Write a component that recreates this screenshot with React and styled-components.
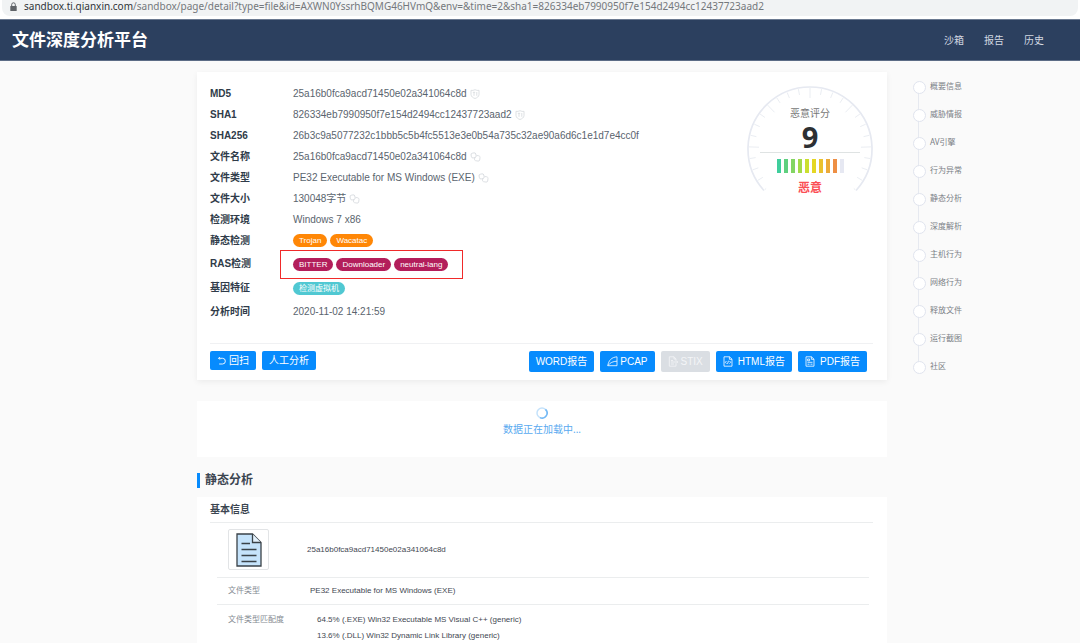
import React from 'react';
import styled, { createGlobalStyle, css } from 'styled-components';

const sans = '"Liberation Sans", "Noto Sans CJK SC", sans-serif';
const ui = '"Noto Sans", "Noto Sans CJK SC", sans-serif';

const GlobalStyle = createGlobalStyle`
  * { box-sizing: border-box; }
  body { margin: 0; background: #fafafa; font-family: ${sans}; color: #5a646e; font-size: 10px; }
  ul, ol, dl, dd, h1, h2, h3, p { margin: 0; padding: 0; list-style: none; }
  button { font-family: inherit; }
`;

const Page = styled.div`
  min-height: 100vh;
  display: flex;
  flex-direction: column;
`;

const AddressBar = styled.div`
  height: 19px;
  padding: 0 2px 3px;
  background: #fff;
`;

const Address = styled.div`
  height: 16px;
  padding: 0 0 3px 8px;
  display: flex;
  align-items: center;
  gap: 7px;
  border-radius: 0 0 8px 8px;
  background: #f1f3f4;
  color: #74787c;
  font: 10px/13px ${ui};
  white-space: nowrap;
  b { font-weight: 400; color: #303438; }
`;

const Header = styled.header`
  height: 42px;
  padding: 0 36px 0 12px;
  display: flex;
  align-items: center;
  justify-content: space-between;
  background: #2c405f;
  border-top: 1px solid #6b7a91;
  border-bottom: 1px solid #5c6c86;
`;

const Brand = styled.h1`
  color: #fff;
  font: 700 17px/24px ${ui};
`;

const TopNav = styled.nav`
  display: flex;
  gap: 20px;
`;

const TopLink = styled.a`
  color: #d3d9e2;
  font: 10px/16px ${ui};
  text-decoration: none;
`;

const Columns = styled.div`
  flex: 1;
  display: grid;
  grid-template-columns: minmax(0, 197fr) minmax(0, 690fr) minmax(0, 193fr);
`;

const Main = styled.main`
  grid-column: 2;
  padding-top: 11px;
  display: flex;
  flex-direction: column;
`;

const Summary = styled.section`
  padding: 11px 14px 8px 13px;
  background: #fff;
  box-shadow: 0 2px 6px rgba(0, 0, 0, 0.06);
`;

const SummaryTop = styled.div`
  display: flex;
  justify-content: space-between;
`;

const Field = styled.div`
  height: ${(p) => (p.$tall ? 24 : 21)}px;
  padding-top: ${(p) => (p.$tall ? 2 : 0)}px;
  display: flex;
  align-items: center;
  dt {
    width: 82px;
    color: #2f3b49;
    font-weight: 700;
    line-height: 16px;
  }
  dd {
    position: relative;
    display: flex;
    align-items: center;
    gap: 3px;
    line-height: 16px;
    white-space: nowrap;
  }
`;

const Value = styled.span`
  margin-left: 1px;
`;

const IconButton = styled.button`
  padding: 0;
  border: 0;
  background: none;
  color: #d9dce0;
  display: flex;
`;

const Tag = styled.span`
  height: 13px;
  padding: 0 6px;
  border-radius: 7px;
  background: ${(p) => p.$color};
  color: #fff;
  font-size: 8px;
  line-height: 13px;
`;

const Tags = styled.span`
  display: flex;
  gap: 3px;
  margin-left: 1px;
`;

const Highlight = styled.span`
  position: absolute;
  inset: -8px -15px -8px -12px;
  border: 1px solid #f02a2a;
`;

const Gauge = styled.div`
  position: relative;
  width: 126px;
  height: 126px;
  margin-top: 3px;
  padding-top: 19px;
  display: flex;
  flex-direction: column;
  align-items: center;
  font-family: ${ui};
  > svg { position: absolute; inset: 0; }
`;

const GaugeLabel = styled.span`
  color: #777;
  line-height: 16px;
`;

const Score = styled.strong`
  width: 100px;
  height: 32px;
  border-bottom: 1px solid #dfe3e3;
  color: #2d3033;
  font-size: 29px;
  line-height: 31px;
  text-align: center;
`;

const Meter = styled.div`
  display: flex;
  gap: 3px;
  margin: 6px 0 7px;
`;

const MeterBar = styled.i`
  width: 4px;
  height: 14px;
  background: ${(p) => p.$color};
`;

const Verdict = styled.span`
  color: #fb4f55;
  font-size: 12px;
  font-weight: 700;
  line-height: 16px;
`;

const Actions = styled.div`
  margin-top: 20px;
  padding: 7px 6px 0 0;
  display: flex;
  justify-content: space-between;
  align-items: flex-start;
  border-top: 1px solid #f0f1f3;
`;

const ActionGroup = styled.div`
  display: flex;
  gap: 6px;
`;

const Button = styled.button`
  height: ${(p) => (p.$large ? 21 : 19)}px;
  padding: 0 7px;
  display: flex;
  align-items: center;
  gap: ${(p) => p.$gap || 2}px;
  border: 0;
  border-radius: 2px;
  background: #078bfd;
  color: #fff;
  font-size: 10px;
  line-height: 16px;
  white-space: nowrap;
  &:disabled { background: #dadee3; color: #f4f5f7; }
`;

const Loading = styled.section`
  height: 56px;
  margin-top: 21px;
  padding-top: 6px;
  display: flex;
  flex-direction: column;
  align-items: center;
  background: #fff;
  color: #5aaaf0;
  line-height: 16px;
  font-family: ${ui};
  p { margin-top: 2px; }
`;

const SectionTitle = styled.h2`
  margin: 16px 0 9px;
  padding-left: 5px;
  border-left: 3px solid #078bfd;
  color: #3b4550;
  font-size: 12px;
  line-height: 15px;
`;

const Details = styled.section`
  flex: 1;
  padding: 0 14px 0 13px;
  background: #fff;
`;

const DetailsTitle = styled.h3`
  height: 26px;
  border-bottom: 1px solid #ebedee;
  color: #3b4550;
  font-size: 10px;
  line-height: 26px;
`;

const DetailsTable = styled.table`
  width: 100%;
  border-collapse: collapse;
  font-size: 8px;
  color: #3f4852;
`;

const Inset = styled.div`
  padding: 0 4px 0 7px;
`;

const cell = css`
  padding: 0;
  text-align: left;
  font-weight: 400;
  vertical-align: ${(p) => (p.$top ? 'top' : 'middle')};
`;

const DetailRow = styled.tr`
  height: ${(p) => p.$height}px;
  border-bottom: ${(p) => (p.$last ? 0 : 1)}px solid #ebedee;
`;

const HeadCell = styled.th`
  ${cell}
  width: 90px;
  padding-left: 11px;
  padding-top: ${(p) => (p.$top ? 7 : 0)}px;
  color: #858b92;
  line-height: 16px;
`;

const DataCell = styled.td`
  ${cell}
  padding-left: ${(p) => p.$indent || 0}px;
  padding-top: ${(p) => (p.$top ? 7 : 0)}px;
  line-height: 16px;
`;

const Thumb = styled.span`
  width: 41px;
  height: 41px;
  display: flex;
  align-items: center;
  justify-content: center;
  border: 1px solid #e2e4e6;
  border-radius: 2px;
`;

const Anchors = styled.ol`
  grid-column: 3;
  && { padding: 11px 0 0 26px; }
`;

const Anchor = styled.li`
  position: relative;
  height: 28px;
  padding-left: 17px;
  display: flex;
  align-items: center;
  &:not(:last-child)::before {
    content: '';
    position: absolute;
    left: 5px;
    top: 14px;
    width: 1px;
    height: 28px;
    background: #e6e9f0;
  }
  &::after {
    content: '';
    position: absolute;
    left: 0;
    top: 9px;
    width: 11px;
    height: 11px;
    border: 1px solid #e0e4ee;
    border-radius: 50%;
    background: #fff;
  }
  a {
    color: #7b8086;
    font: 8px/16px ${ui};
    text-decoration: none;
  }
`;

const LockIcon = () => (
  <svg width="7" height="10" viewBox="0 0 7 10" fill="none">
    <path d="M1.7 4.5V2.6a1.8 1.8 0 0 1 3.6 0v1.9" stroke="#5f6368" strokeWidth="1" />
    <rect x="0.3" y="4" width="6.4" height="5" rx="0.6" fill="#5f6368" />
  </svg>
);

const ShieldIcon = () => (
  <svg width="10" height="10" viewBox="0 0 10 10" fill="none" stroke="currentColor" strokeWidth="0.9">
    <path d="M1 1.300C2.500 1.600 3.800 1.300 5 .6c1.200.7 2.500 1 4 .7v4.200C9 7.600 7 8.800 5 9.500 3 8.800 1 7.600 1 5.500z" />
    <path d="M2.800 3.300h2.400M4 3.300v3.500M6.800 3v3.800" />
  </svg>
);

const CopyIcon = () => (
  <svg width="11" height="10" viewBox="0 0 11 10" fill="none" stroke="currentColor" strokeWidth="0.9">
    <rect x="1.200" y="1" width="4.800" height="4.800" rx="1.500" transform="rotate(-12 3.600 3.400)" />
    <path d="M6.500 3.400l2.300.4c.8.2 1.300.8 1.200 1.600l-.3 2.600c-.2.8-.8 1.200-1.600 1.100l-2.500-.4c-.8-.2-1.200-.8-1.100-1.500l.3-1.600" />
  </svg>
);

const RescanIcon = () => (
  <svg width="10" height="10" viewBox="0 0 10 10" fill="none" stroke="currentColor" strokeWidth="0.9">
    <path d="M1.500 2.300h4A2.800 2.800 0 0 1 5.500 8H2.200M2.900 1 1.600 2.300l1.300 1.300" />
  </svg>
);

const PcapIcon = () => (
  <svg width="11" height="11" viewBox="0 0 11 11" fill="none" stroke="currentColor" strokeWidth="0.8">
    <path d="M.8 9.700C1.500 4.500 4.500 1.300 10 .8v8.900zM.8 9.700C3.200 6.400 6 5.400 10 5.200" />
  </svg>
);

const StixIcon = () => (
  <svg width="11" height="11" viewBox="0 0 11 11" fill="none" stroke="currentColor" strokeWidth="0.8">
    <path d="M8 4V3L6 .8H1.300v9.400H8V8M6 .8V3h2M3 4.500h2M3 6h5M7.500 4.500 10 6 7.500 7.600M3 8h3" />
  </svg>
);

const HtmlIcon = () => (
  <svg width="10" height="11" viewBox="0 0 10 11" fill="none" stroke="currentColor" strokeWidth="0.8">
    <path d="M1 .8h5.500L9 3.200v7H1zM6.400 .8v2.500H9M3.500 5 2.300 6.300l1.200 1.300M6.500 5l1.200 1.300-1.200 1.300M5.500 4.700l-1 3.200" />
  </svg>
);

const PdfIcon = () => (
  <svg width="10" height="11" viewBox="0 0 10 11" fill="none" stroke="currentColor" strokeWidth="0.8">
    <path d="M1 .8h5.500L9 3.200v7H1zM6.400 .8v2.500H9M2.600 3h2v1.800h-2zM2.500 6.300h5M2.500 8.200h2M5.500 8.200h2" />
  </svg>
);

const Spinner = () => (
  <svg width="12" height="12" viewBox="0 0 12 12" fill="none">
    <circle cx="6" cy="6" r="5" stroke="#c4e2fb" strokeWidth="1.500" />
    <path d="M9.500 2.400A5 5 0 0 1 4 10.600" stroke="#74b9f5" strokeWidth="1.500" />
  </svg>
);

const DocumentIcon = () => (
  <svg width="26" height="34" viewBox="0 0 26 34" fill="none" stroke="#3a4248" strokeWidth="1.300">
    <path d="M1 1h15.500L25 9.500V33H1z" fill="#c5e3fb" />
    <path d="M16.500 1v8.500H25" fill="#e4f2fd" />
    <path d="M5.500 10.500H14M5.500 16.500h15M5.500 22.500h15M5.500 28.500h15" strokeWidth="1.400" />
  </svg>
);

const polar = (deg, r) => {
  const a = (deg * Math.PI) / 180;
  return [63 + r * Math.sin(a), 63 - r * Math.cos(a)];
};

const tickInner = (i) => {
  if (i === 0 || i === 24) return 59;
  return i % 4 === 0 ? 51 : 55;
};

const Dial = () => {
  const [x1, y1] = polar(-132, 62);
  const [x2, y2] = polar(132, 62);
  const ticks = Array.from({ length: 25 }, (_, i) => -132 + i * 11);
  return (
    <svg width="126" height="126" viewBox="0 0 126 126" fill="none">
      <path d={`M${x1} ${y1}A62 62 0 1 1 ${x2} ${y2}`} stroke="#e6e9f1" strokeWidth="1.700" />
      {ticks.map((deg, i) => {
        const [ax, ay] = polar(deg, 61);
        const [bx, by] = polar(deg, tickInner(i));
        return <path key={deg} d={`M${ax} ${ay}L${bx} ${by}`} stroke="#e8ebf0" strokeWidth="0.900" />;
      })}
    </svg>
  );
};

const meterColors = [
  '#3fce9c', '#5fd07f', '#83d563', '#a3da48', '#cbdf2f',
  '#e5d723', '#eac12e', '#ecaa39', '#ee8f44', '#e6e8f2',
];

const fields = [
  ['MD5', '25a16b0fca9acd71450e02a341064c8d', ShieldIcon],
  ['SHA1', '826334eb7990950f7e154d2494cc12437723aad2', ShieldIcon],
  ['SHA256', '26b3c9a5077232c1bbb5c5b4fc5513e3e0b54a735c32ae90a6d6c1e1d7e4cc0f'],
  ['文件名称', '25a16b0fca9acd71450e02a341064c8d', CopyIcon],
  ['文件类型', 'PE32 Executable for MS Windows (EXE)', CopyIcon],
  ['文件大小', '130048字节', CopyIcon],
  ['检测环境', 'Windows 7 x86'],
];

const anchors = [
  '概要信息', '威胁情报', 'AV引擎', '行为异常', '静态分析', '深度解析',
  '主机行为', '网络行为', '释放文件', '运行截图', '社区',
];

export default function App() {
  return (
    <Page>
      <GlobalStyle />
      <AddressBar>
        <Address>
          <LockIcon />
          <span>
            <b>sandbox.ti.qianxin.com</b>
            /sandbox/page/detail?type=file&amp;id=AXWN0YssrhBQMG46HVmQ&amp;env=&amp;time=2&amp;sha1=826334eb7990950f7e154d2494cc12437723aad2
          </span>
        </Address>
      </AddressBar>
      <Header>
        <Brand>文件深度分析平台</Brand>
        <TopNav>
          {['沙箱', '报告', '历史'].map((t) => <TopLink href="#" key={t}>{t}</TopLink>)}
        </TopNav>
      </Header>
      <Columns>
        <Main>
          <Summary>
            <SummaryTop>
              <dl>
                {fields.map(([label, value, Icon]) => (
                  <Field key={label}>
                    <dt>{label}</dt>
                    <dd>
                      <Value>{value}</Value>
                      {Icon && <IconButton type="button" aria-label={label}><Icon /></IconButton>}
                    </dd>
                  </Field>
                ))}
                <Field>
                  <dt>静态检测</dt>
                  <dd>
                    <Tags>
                      <Tag $color="#ff8706">Trojan</Tag>
                      <Tag $color="#ff8706">Wacatac</Tag>
                    </Tags>
                  </dd>
                </Field>
                <Field $tall>
                  <dt>RAS检测</dt>
                  <dd>
                    <Tags>
                      <Tag $color="#b31e5b">BITTER</Tag>
                      <Tag $color="#b31e5b">Downloader</Tag>
                      <Tag $color="#b31e5b">neutral-lang</Tag>
                    </Tags>
                    <Highlight />
                  </dd>
                </Field>
                <Field $tall>
                  <dt>基因特征</dt>
                  <dd><Tags><Tag $color="#50c8d2">检测虚拟机</Tag></Tags></dd>
                </Field>
                <Field $tall>
                  <dt>分析时间</dt>
                  <dd><Value>2020-11-02 14:21:59</Value></dd>
                </Field>
              </dl>
              <Gauge>
                <Dial />
                <GaugeLabel>恶意评分</GaugeLabel>
                <Score>9</Score>
                <Meter>{meterColors.map((c) => <MeterBar key={c} $color={c} />)}</Meter>
                <Verdict>恶意</Verdict>
              </Gauge>
            </SummaryTop>
            <Actions>
              <ActionGroup>
                <Button type="button"><RescanIcon />回扫</Button>
                <Button type="button">人工分析</Button>
              </ActionGroup>
              <ActionGroup>
                <Button type="button" $large>WORD报告</Button>
                <Button type="button" $large><PcapIcon />PCAP</Button>
                <Button type="button" $large disabled><StixIcon />STIX</Button>
                <Button type="button" $large $gap={5}><HtmlIcon />HTML报告</Button>
                <Button type="button" $large $gap={5}><PdfIcon />PDF报告</Button>
              </ActionGroup>
            </Actions>
          </Summary>
          <Loading>
            <Spinner />
            <p>数据正在加载中...</p>
          </Loading>
          <SectionTitle>静态分析</SectionTitle>
          <Details>
            <DetailsTitle>基本信息</DetailsTitle>
            <Inset>
              <DetailsTable>
                <tbody>
                  <DetailRow $height={54}>
                    <HeadCell scope="row"><Thumb><DocumentIcon /></Thumb></HeadCell>
                    <DataCell>25a16b0fca9acd71450e02a341064c8d</DataCell>
                  </DetailRow>
                  <DetailRow $height={27}>
                    <HeadCell scope="row">文件类型</HeadCell>
                    <DataCell $indent={3}>PE32 Executable for MS Windows (EXE)</DataCell>
                  </DetailRow>
                  <DetailRow $height={39} $last>
                    <HeadCell scope="row" $top>文件类型匹配度</HeadCell>
                    <DataCell $indent={10} $top>
                      64.5% (.EXE) Win32 Executable MS Visual C++ (generic)<br />
                      13.6% (.DLL) Win32 Dynamic Link Library (generic)
                    </DataCell>
                  </DetailRow>
                </tbody>
              </DetailsTable>
            </Inset>
          </Details>
        </Main>
        <Anchors>
          {anchors.map((t) => <Anchor key={t}><a href="#">{t}</a></Anchor>)}
        </Anchors>
      </Columns>
    </Page>
  );
}
